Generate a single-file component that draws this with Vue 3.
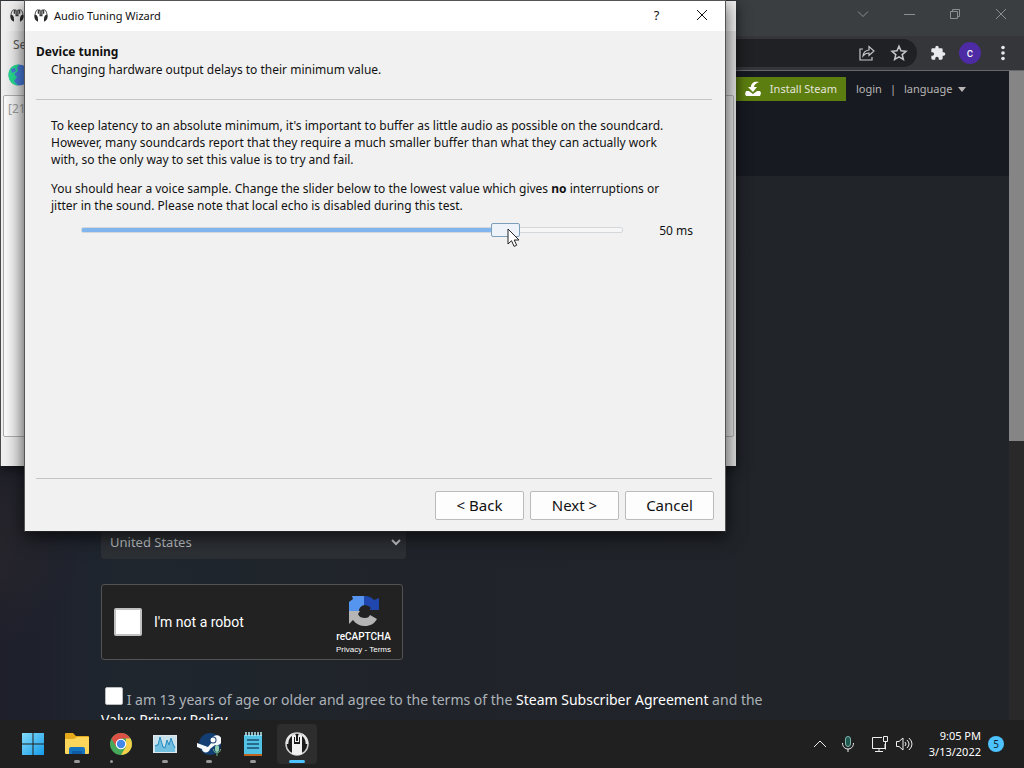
<script setup>
import { ref, computed } from 'vue'

const delay = ref(50)
const minDelay = 10
const maxDelay = 60
const fill = computed(() => ((delay.value - minDelay) / (maxDelay - minDelay)) * 100 + '%')
const country = ref('United States')
const human = ref(false)
const agree = ref(false)
</script>

<template>
  <div class="desktop">
    <section class="browser" aria-label="Browser">
      <header class="titlebar">
        <button class="caption" aria-label="Search tabs"><svg viewBox="0 0 12 12"><path d="M1 3.500l5 5 5-5" /></svg></button>
        <button class="caption" aria-label="Minimize"><svg viewBox="0 0 12 12"><path d="M1 6.500h11" /></svg></button>
        <button class="caption" aria-label="Restore"><svg viewBox="0 0 12 12"><path d="M1.500 3.500h7v7h-7zM3.500 3.500v-2h7v7h-2" /></svg></button>
        <button class="caption" aria-label="Close browser"><svg viewBox="0 0 12 12"><path d="M1 1l10 10M11 1L1 11" /></svg></button>
      </header>
      <div class="toolbar">
        <div class="omnibox">
          <button class="tool share" aria-label="Share">
            <svg viewBox="0 0 18 18"><path d="M5 5H2v11h12v-3" /><path d="M11 6V2.500l5 4.500-5 4.500V9c-3 0-4.500 1-6 3 .3-3.500 2-5.500 6-6z" /></svg>
          </button>
          <button class="tool" aria-label="Bookmark">
            <svg viewBox="0 0 18 18"><path d="M9 2.200l2 4.600 5 .5-3.800 3.300 1.200 4.900L9 12.900l-4.400 2.600 1.200-4.900L2 7.300l5-.5z" /></svg>
          </button>
        </div>
        <button class="tool solid" aria-label="Extensions">
          <svg viewBox="0 0 24 24"><path d="M20.500 11H19V7a2 2 0 0 0-2-2h-4V3.500a2.500 2.500 0 0 0-5 0V5H4a2 2 0 0 0-2 2v3.800h1.500a2.700 2.700 0 0 1 0 5.400H2V20a2 2 0 0 0 2 2h3.800v-1.500a2.700 2.700 0 0 1 5.400 0V22H17a2 2 0 0 0 2-2v-4h1.500a2.500 2.500 0 0 0 0-5z" /></svg>
        </button>
        <button class="avatar" aria-label="Profile">c</button>
        <button class="tool solid menu" aria-label="Browser menu">
          <svg viewBox="0 0 18 18"><circle cx="9" cy="3.500" r="1.800" /><circle cx="9" cy="9" r="1.800" /><circle cx="9" cy="14.500" r="1.800" /></svg>
        </button>
      </div>
      <div class="viewport">
        <main class="page">
          <div class="steamhead">
            <nav class="steamnav">
              <a href="#" class="install">
                <svg viewBox="0 0 16 16"><path d="M1 10h3l4 3 4-3h3l1 2-1 3H1l-1-2z" /><path d="M14 1C9 0 6 2 6 6H3l5 5 4-5H9c0-2 2-4 5-5z" /></svg>
                Install Steam
              </a>
              <a href="#">login</a>
              <span class="bar">|</span>
              <a href="#" class="lang">language <i></i></a>
            </nav>
          </div>
          <form class="join" @submit.prevent>
            <div class="selectwrap">
              <select v-model="country" aria-label="Country of residence"><option>United States</option></select>
              <svg viewBox="0 0 12 12"><path d="M2 4l4 4 4-4" /></svg>
            </div>
            <div class="captcha">
              <label class="human"><input v-model="human" type="checkbox" />I'm not a robot</label>
              <div class="brand">
                <svg viewBox="0 0 32 32">
                  <path fill="#5595f0" d="M4 1h12v10c-3 0-5 2-5 5H1V7l4-3z" />
                  <path fill="#2047ae" d="M16 1c5 0 7 1 10 4l5-2v12H21l2-2c-2-2-4-3-7-3z" />
                  <path fill="#b5b5b5" d="M1 16h11l-2 3c1 3 4 4 7 4 3 0 4-1 5-3l7 4c-3 5-7 7-12 7s-9-2-12-6l-4 4z" />
                  <path fill="#222" d="M12 13l3-3 3 3h4v6h-4l-3 2-3-3z" />
                </svg>
                <b>reCAPTCHA</b>
                <small><a href="#">Privacy</a> - <a href="#">Terms</a></small>
              </div>
            </div>
            <div class="agree">
              <input id="agree" v-model="agree" type="checkbox" />
              <label for="agree"> I am 13 years of age or older and agree to the terms of the <a href="#">Steam Subscriber Agreement</a> and the <a href="#">Valve Privacy Policy</a></label>
            </div>
          </form>
        </main>
        <div class="scroll"><div class="thumb"></div></div>
      </div>
    </section>

    <section class="mumble" aria-label="Mumble">
      <div class="mtitle"><svg class="logo" viewBox="0 0 16 16"><use href="#mumble-mark" /></svg></div>
      <div class="mmenu">Server</div>
      <div class="mtools">
        <svg viewBox="0 0 22 22"><circle cx="11" cy="11" r="10.500" fill="#4878d8" /><path fill="#25d88b" d="M11 .5C4 .5.500 5 .5 11S4 21 10 21.500L6 17l3-4-3-3 4-3-1-3z" /><path fill="#4878d8" d="M3 5l4-1 1 3-4 2z" /></svg>
      </div>
      <div class="log">[21:04]</div>
    </section>

    <section class="dialog" role="dialog" aria-labelledby="wizard-title">
      <header class="dtitle">
        <svg class="logo" viewBox="0 0 16 16">
          <g id="mumble-mark">
            <path fill="none" stroke="#3a3a3a" stroke-width="1.500" d="M5 6V2.500c0-1 2-1 2 0V8h2V2.500c0-1 2-1 2 0V6" />
            <path fill="none" stroke="#5b5b5b" stroke-width="1.200" d="M5 1C2 2 1 5 1.200 9M11 1c3 1 4 4 3.800 8" />
            <path fill="#292929" d="M1 7c3 0 4 3 3.500 8C1 14-.5 10 1 7zM15 7c-3 0-4 3-3.500 8 3.500-1 5-5 3.500-8z" />
          </g>
        </svg>
        <h1 id="wizard-title">Audio Tuning Wizard</h1>
        <button class="dcap" aria-label="Help">?</button>
        <button class="dcap" aria-label="Close"><svg viewBox="0 0 12 12"><path d="M1 1l10 10M11 1L1 11" /></svg></button>
      </header>
      <div class="dbody">
        <div class="heading">
          <h2>Device tuning</h2>
          <p>Changing hardware output delays to their minimum value.</p>
        </div>
        <div class="content">
          <p>To keep latency to an absolute minimum, it's important to buffer as little audio as possible on the soundcard. However, many soundcards report that they require a much smaller buffer than what they can actually work with, so the only way to set this value is to try and fail.</p>
          <p>You should hear a voice sample. Change the slider below to the lowest value which gives <b>no</b> interruptions or jitter in the sound. Please note that local echo is disabled during this test.</p>
          <div class="sliderrow">
            <div class="track">
              <input id="delay" v-model.number="delay" type="range" :min="minDelay" :max="maxDelay" step="10" aria-label="Output delay" :style="{ '--fill': fill }" />
              <svg class="cursor" viewBox="0 0 13 20"><path d="M1 1v15l3.500-3.300 2.600 5.700 2.600-1.200L7.200 12H12z" /></svg>
            </div>
            <output for="delay">{{ delay }} ms</output>
          </div>
        </div>
        <footer class="actions">
          <button>&lt; Back</button>
          <button>Next &gt;</button>
          <button>Cancel</button>
        </footer>
      </div>
    </section>

    <footer class="taskbar">
      <div class="apps">
        <button class="app" aria-label="Start">
          <svg viewBox="0 0 24 24"><defs><linearGradient id="win" x2="1" y2="1"><stop stop-color="#83dcfb" /><stop offset="1" stop-color="#159be8" /></linearGradient></defs><path fill="url(#win)" d="M1 1h10.500v10.500H1zM12.500 1H23v10.500H12.500zM1 12.500h10.500V23H1zM12.500 12.500H23V23H12.500z" /></svg>
        </button>
        <button class="app run" aria-label="File Explorer">
          <svg viewBox="0 0 24 24"><path fill="#e6a91c" d="M0 2q0-1 1-1h7l3 3h12q1 0 1 1v8H0z" /><path fill="#fbd65b" d="M0 7h9l3-2h12v16q0 1-1 1H1q-1 0-1-1z" /><path fill="#1673bd" d="M4 22v-5q0-2 2-2h12q2 0 2 2v5z" /><path fill="#0d5ca5" d="M7 19h10v3H7z" /></svg>
        </button>
        <button class="app run left" aria-label="Google Chrome">
          <svg viewBox="0 0 24 24"><circle cx="12" cy="12" r="11" fill="#46a85a" /><path fill="#dc5146" d="M2.500 6.500a11 11 0 0 1 19 0H12l-5 8z" /><path fill="#f5cf48" d="M21.500 6.500A11 11 0 0 1 12 23l5-8.500V6.500z" /><circle cx="12" cy="12" r="5.300" fill="#fff" /><circle cx="12" cy="12" r="4.200" fill="#4387e8" /></svg>
        </button>
        <button class="app run" aria-label="Task Manager">
          <svg viewBox="0 0 24 24"><path fill="#dfe7ec" d="M0 3h24v18H0z" /><path fill="#c9e1ea" d="M1 4h22v16H1z" /><path fill="#73bfe0" d="M2 20v-7l3-1 2-7 3 9 2 1 2-7 2 5 2-7 2 6 2 3v5z" /><path fill="none" stroke="#268bc0" d="M2 14l3-1 2-8 3 10 2 1 2-8 2 5 2-7 2 6 2 4" /></svg>
        </button>
        <button class="app run" aria-label="Steam">
          <svg viewBox="0 0 24 24"><circle cx="13" cy="12" r="11" fill="#123e73" /><path fill="#f4f8fb" d="M0 11l11 4 4-5a5 5 0 1 1 3 3l-5 4c-1 5-8 4-8 0l-5-2z" /><circle cx="16" cy="8" r="3.500" fill="#173f70" /><circle cx="16" cy="8" r="2.500" fill="#fff" /><rect x="18" y="13" width="4" height="7" rx="2" fill="#93d0b3" /><path fill="none" stroke="#72b890" d="M16.500 17c0 5 7 5 7 0M20 21v3" /></svg>
        </button>
        <button class="app run" aria-label="Notepad">
          <svg viewBox="0 0 24 24"><path fill="#52c2e4" d="M3 3h18v19H3z" /><path fill="#bd651c" d="M3 22h18v2H3z" /><path stroke="#184e71" stroke-width="1.500" d="M6 8h12M6 12h12M6 16h12" /><path stroke="#bdebf6" stroke-width="1.500" d="M5 0v4M8 0v4M11 0v4M14 0v4M17 0v4M20 0v4" /></svg>
        </button>
        <button class="app run active" aria-label="Mumble">
          <svg viewBox="0 0 24 24"><circle cx="12" cy="12" r="11" fill="#1b1b1b" stroke="#d0d0d0" stroke-width="1.500" /><path fill="#f1f1f1" d="M7 22V4q0-2 2-2t2 2v5h2V4q0-2 2-2t2 2v18q-5 2-10 0z" /><path fill="#1b1b1b" d="M9 5h1v5h4V5h1v7H9z" /><path fill="none" stroke="#e5e5e5" stroke-width="2.500" d="M7 2.500C3 5 2 8 2 12M17 2.500c4 2.500 5 5.500 5 9.500" /></svg>
        </button>
      </div>
      <div class="tray">
        <button aria-label="Show hidden icons"><svg viewBox="0 0 18 18"><path d="M3 12l6-6 6 6" /></svg></button>
        <button aria-label="Microphone"><svg viewBox="0 0 18 18"><rect x="6.500" y="1.500" width="5" height="10" rx="2.500" fill="#20594f" stroke="#7fb4ab" /><path d="M3.500 8c0 8 11 8 11 0M9 14v3" /></svg></button>
        <button class="net" aria-label="Network"><svg viewBox="0 0 18 18"><path d="M11 2.500H1.500v11H14V9M8 13.500v3M4 16.500h8M12.500 1.500h4v5h-4zM14.500 6.500v8" /></svg></button>
        <button aria-label="Volume"><svg viewBox="0 0 18 18"><path d="M1.500 6.500H4l4-3.500v12l-4-3.500H1.500zM10 7q2 2 0 4M12 5q4 4 0 8M14 3q6 6 0 12" /></svg></button>
        <div class="clock"><time>9:05 PM</time><time>3/13/2022</time></div>
        <span class="badge">5</span>
      </div>
    </footer>
  </div>
</template>

<style>
body { margin: 0; background: #1f1f1f; }
</style>

<style scoped>
* { box-sizing: border-box; }
button { padding: 0; border: 0; background: none; color: inherit; font: inherit; }
a { color: inherit; text-decoration: none; }
h1, h2, p { margin: 0; font: inherit; }
svg { display: block; fill: none; stroke-width: 1; }
.desktop { position: relative; display: flex; flex-direction: column; height: 100vh; overflow: hidden; background: #202020; font: 12px/17px "Noto Sans", "Open Sans", sans-serif; }

.browser { flex: 1; min-height: 0; display: flex; flex-direction: column; }
.titlebar { display: flex; justify-content: flex-end; align-items: center; height: 36px; padding-bottom: 8px; background: #3a3e41; color: #8d8f90; }
.caption { display: grid; place-items: center; width: 46px; height: 28px; }
.caption svg { width: 12px; height: 12px; stroke: currentColor; }
.toolbar { display: flex; align-items: center; height: 35px; padding: 0 12px 0 0; background: #35363a; border-bottom: 1px solid #65676a; color: #e8eaed; }
.omnibox { flex: 1; display: flex; justify-content: flex-end; align-items: center; gap: 14px; height: 28px; padding-right: 9px; border-radius: 0 14px 14px 0; background: #202124; color: #c5c7ca; }
.tool svg { width: 18px; height: 18px; stroke: currentColor; stroke-width: 1.500; }
.tool.share svg { stroke-width: 1.200; }
.solid { margin-left: 13px; }
.solid svg { fill: currentColor; stroke: none; }
.tool.solid:not(.menu) svg { width: 16px; height: 16px; }
.avatar { width: 22px; height: 22px; margin-left: 13px; border-radius: 50%; background: #4d2ba5; color: #fff; font: 12px/22px Roboto, sans-serif; }
.viewport { flex: 1; min-height: 0; display: flex; overflow: hidden; }
.page { flex: 1; overflow: hidden; background: radial-gradient(circle 110px at -30px 470px, #29262b 0, #241f2900 100%), linear-gradient(90deg, #1e1f2b 0, #1f262e 120px, #20242a 380px, #212429 100%); }
.scroll { width: 15px; background: #292929; }
.thumb { height: 57%; background: #858585; }
.steamhead { height: 105px; padding-top: 6px; background: #171a21; }
.steamnav { display: flex; justify-content: flex-end; align-items: center; max-width: 940px; height: 24px; margin: 0 auto; padding-right: 9px; color: #b8b6b4; font-size: 11px; line-height: 24px; }
.install { display: flex; align-items: center; gap: 9px; height: 24px; padding: 0 9px; margin-right: 10px; background: #5c7e10; color: #e5e4dc; }
.install svg { width: 16px; height: 16px; fill: #fff; }
.bar { margin: 0 8px; }
.lang { display: flex; align-items: center; gap: 5px; }
.lang i { border: 4px solid transparent; border-top: 5px solid #b8b6b4; border-bottom: 0; }
.join { padding: 350px 0 0 101px; color: #acb2b8; }
.selectwrap { position: relative; width: 305px; }
.selectwrap select { display: block; appearance: none; width: 100%; height: 33px; padding: 0 9px 2px; border: 0; border-radius: 3px; background: #2c2f34; color: #b8bcbf; font: 13px "Noto Sans", sans-serif; }
.selectwrap svg { position: absolute; right: 4px; top: 10px; width: 12px; height: 12px; stroke: #c5c7c9; stroke-width: 2; pointer-events: none; }
.captcha { display: flex; justify-content: space-between; align-items: center; width: 302px; height: 76px; margin-top: 25px; padding: 0 11px 0 12px; border: 1px solid #525252; border-radius: 3px; background: #222; color: #fff; font-family: Roboto, sans-serif; }
.human { display: flex; align-items: center; gap: 12px; font-size: 14px; }
.human input { appearance: none; width: 28px; height: 28px; margin: 0; border: 2px solid #c1c1c1; border-radius: 2px; background: #fff; }
.brand { display: flex; flex-direction: column; align-items: center; padding-top: 5px; }
.brand svg { width: 32px; height: 32px; margin-bottom: 3px; }
.brand b { font: 500 10px/14px Roboto, sans-serif; }
.brand small { font: 8px/11px "Liberation Sans", sans-serif; }
.agree { width: 680px; margin-top: 27px; font-size: 14px; line-height: 20px; }
.agree input { appearance: none; width: 18px; height: 18px; margin: 0 0 0 4px; vertical-align: 0; border: 1px solid #bbb; border-radius: 2px; background: #fff; }
.agree a { color: #fff; }

.mumble { position: absolute; left: 0; top: 1px; display: flex; flex-direction: column; width: 736px; height: 465px; padding: 0 2px 29px; border: solid #4a4a4a; border-width: 0 0 0 1px; background: linear-gradient(90deg, #f0f0f0 0, #ddd 24px, #ddd 100%); color: #555; box-shadow: 0 3px 12px #0009; }
.mtitle { height: 30px; margin: 0 -2px; padding: 7px 0 0 9px; background: #eee; }
.logo { width: 14px; height: 15px; flex: none; }
.mmenu { padding: 5px 10px; height: 30px; }
.mtools { height: 34px; padding: 3px 5px; }
.mtools svg { width: 22px; height: 22px; }
.log { flex: 1; padding: 4px; border: 1px solid #aaa; border-radius: 2px; background: linear-gradient(90deg, #fafafa 0, #ddd 22px); color: #999; }

.dialog { position: absolute; left: 24px; top: 0; display: flex; flex-direction: column; width: 702px; min-height: 532px; border: 1px solid #555; border-bottom-color: #222; background: #f1f1f1; color: #111; box-shadow: 0 5px 16px #000a; }
.dtitle { display: flex; align-items: center; height: 30px; padding: 0 1px 2px 9px; background: #fff; }
.dtitle h1 { flex: 1; margin-left: 6px; font-size: 11px; }
.dcap { display: grid; place-items: center; width: 45px; height: 28px; font-size: 13px; }
.dcap svg { width: 12px; height: 12px; stroke: #111; }
.dbody { flex: 1; display: flex; flex-direction: column; padding: 0 13px 11px 11px; }
.heading { height: 69px; padding-top: 12px; border-bottom: 1px solid #c5c5c5; line-height: 18px; }
.heading h2 { font-weight: 700; }
.heading p { padding-left: 15px; }
.content { flex: 1; padding: 17px 15px 0; }
.content p { padding-right: 16px; }
.content p + p { margin-top: 12px; }
.sliderrow { display: flex; align-items: center; gap: 36px; margin: 6px 4px 0 30px; height: 20px; }
.track { position: relative; flex: 1; height: 16px; }
.track input { appearance: none; display: block; width: 100%; height: 16px; margin: 0; background: none; }
.track input::-webkit-slider-runnable-track { height: 6px; border: 1px solid #d4d8da; border-radius: 2px; background: linear-gradient(90deg, #80b5ee var(--fill), #f6f6f6 var(--fill)); }
.track input::-webkit-slider-thumb { appearance: none; width: 29px; height: 14px; margin-top: -5px; border: 1px solid #7d9eb9; border-radius: 2px; background: #edf3f8; }
.cursor { position: absolute; left: 78.500%; top: 6px; width: 13px; height: 20px; fill: #fff; stroke: #222; pointer-events: none; }
.actions { display: flex; justify-content: flex-end; gap: 6px; margin-right: -2px; padding-top: 13px; position: relative; }
.actions::before { content: ""; position: absolute; left: 0; right: 2px; top: 0; border-top: 1px solid #c5c5c5; }
.actions button { width: 89px; height: 29px; border: 1px solid #bbb; border-radius: 2px; background: #fdfdfd; font-size: 15px; }

.taskbar { display: flex; justify-content: space-between; height: 48px; background: #202020; color: #fff; }
.apps { display: flex; align-items: center; gap: 4px; padding-left: 13px; }
.app { position: relative; display: grid; place-items: center; width: 40px; height: 40px; border-radius: 4px; }
.app svg { width: 24px; height: 24px; }
.run::after { content: ""; position: absolute; bottom: 1px; width: 6px; height: 3px; border-radius: 2px; background: #999; }
.left::after { left: 9px; width: 3px; }
.active { background: #2d2d2d; }
.active::after { width: 16px; background: #4cc2ff; }
.tray { display: flex; align-items: center; padding-right: 20px; }
.tray button { width: 28px; display: grid; place-items: center; }
.tray button svg { width: 18px; height: 18px; stroke: #eee; }
.tray .net { margin-left: 8px; width: 20px; }
.clock { display: flex; flex-direction: column; width: 63px; margin-right: 7px; text-align: right; font-size: 11px; line-height: 16px; }
.badge { width: 16px; height: 16px; border-radius: 50%; background: #4cc2ff; color: #123; text-align: center; font-size: 10px; line-height: 16px; }
</style>
